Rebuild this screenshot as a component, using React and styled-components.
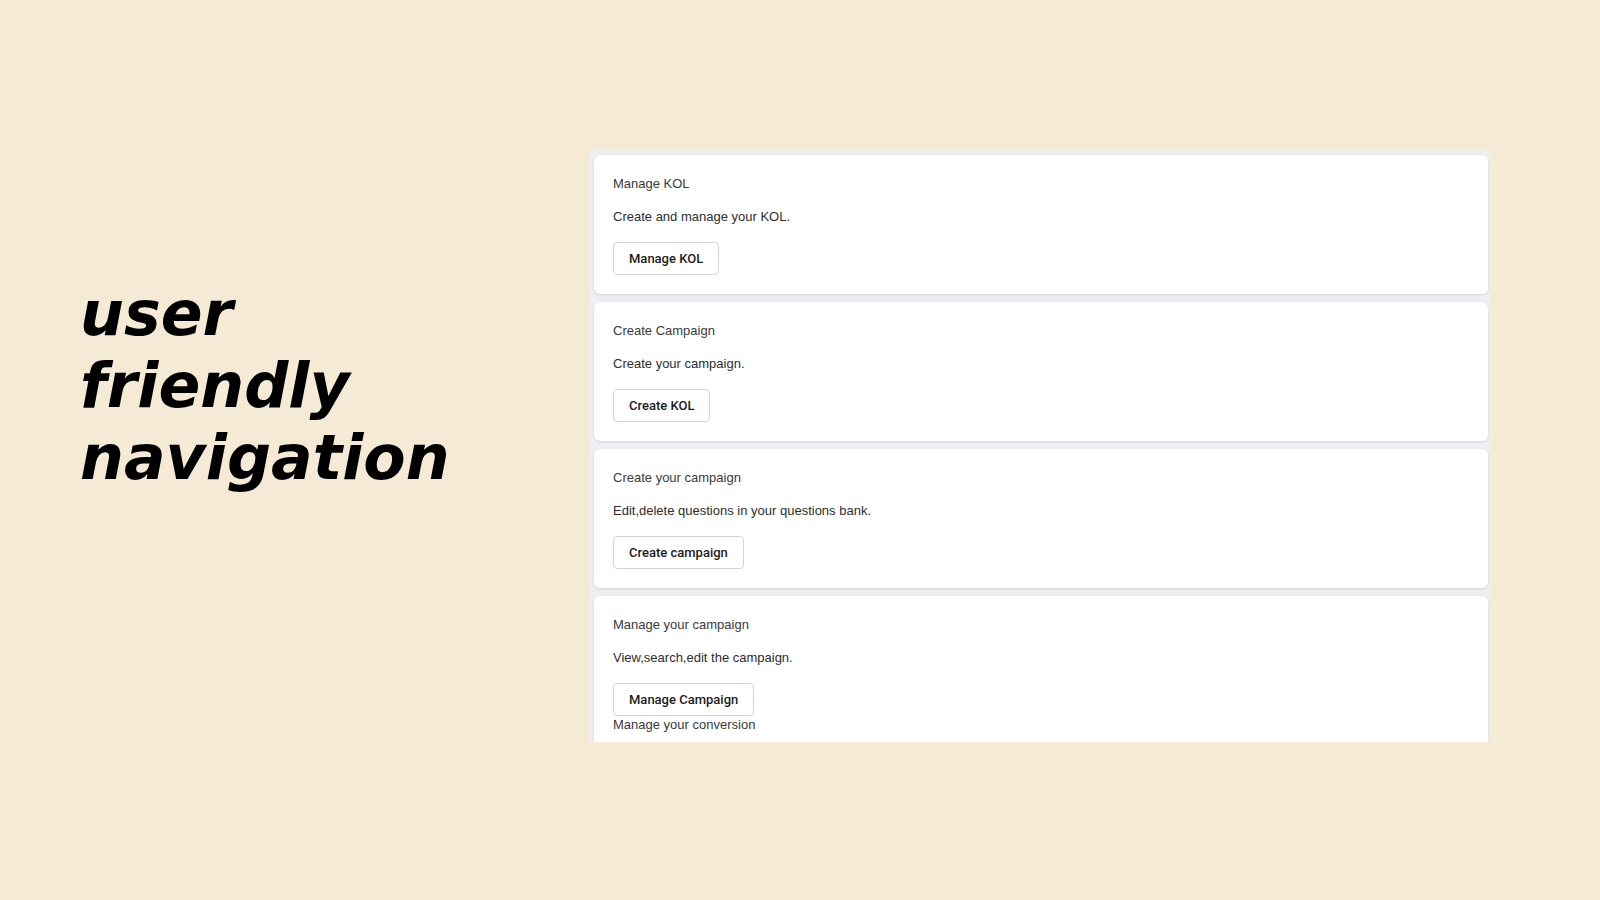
import React from "react";
import styled, { createGlobalStyle } from "styled-components";

const GlobalStyle = createGlobalStyle`
  html, body {
    margin: 0;
    padding: 0;
    background: #f5ead5;
  }
  * { box-sizing: border-box; }
`;

const Slide = styled.div`
  width: 1600px;
  height: 900px;
  display: flex;
  align-items: flex-start;
  background: #f5ead5;
  overflow: hidden;
`;

const HeadlineColumn = styled.div`
  width: 590px;
  flex: none;
  padding: 278px 0 0 80px;
`;

const Headline = styled.h1`
  margin: 0;
  width: 420px;
  font-family: "DejaVu Sans", sans-serif;
  font-weight: 700;
  font-style: italic;
  font-size: 61.7px;
  line-height: 72px;
  color: #000;
`;

const Panel = styled.div`
  margin-top: 150px;
  width: 900px;
  height: 592px;
  flex: none;
  background: #eeeff2;
  overflow: hidden;
  padding: 5px 2px 0 4px;
  display: flex;
  flex-direction: column;
  gap: 8px;
`;

const Card = styled.section`
  flex: none;
  background: #ffffff;
  border-radius: 6px;
  box-shadow: 0 1px 3px rgba(0, 0, 0, 0.12);
  padding: 21px 19px 19px;
  font-family: "Liberation Sans", Arial, sans-serif;
  font-size: 13px;
  color: #333;
`;

const Title = styled.div`
  line-height: 15px;
  margin-bottom: 18px;
  color: #3a3a3a;
`;

const Description = styled.p`
  margin: 0 0 17px;
  line-height: 16px;
  color: #2e2e2e;
`;

const ActionButton = styled.button`
  display: block;
  height: 33px;
  padding: 0 15px;
  background: #fff;
  border: 1px solid #d3d4d8;
  border-radius: 4px;
  font-family: Roboto, "Liberation Sans", sans-serif;
  font-weight: 500;
  font-size: 13px;
  color: #1c1c1c;
  cursor: pointer;
`;

const TrailingText = styled.div`
  margin-top: 1px;
  line-height: 16px;
  color: #3a3a3a;
`;

const items = [
  { title: "Manage KOL", desc: "Create and manage your KOL.", action: "Manage KOL" },
  { title: "Create Campaign", desc: "Create your campaign.", action: "Create KOL" },
  {
    title: "Create your campaign",
    desc: "Edit,delete questions in your questions bank.",
    action: "Create campaign",
  },
  {
    title: "Manage your campaign",
    desc: "View,search,edit the campaign.",
    action: "Manage Campaign",
    trailing: "Manage your conversion",
  },
];

export default function App() {
  return (
    <>
      <GlobalStyle />
      <Slide>
        <HeadlineColumn>
          <Headline>user friendly navigation</Headline>
        </HeadlineColumn>
        <Panel>
          {items.map((it) => (
            <Card key={it.title}>
              <Title>{it.title}</Title>
              <Description>{it.desc}</Description>
              <ActionButton>{it.action}</ActionButton>
              {it.trailing && <TrailingText>{it.trailing}</TrailingText>}
            </Card>
          ))}
        </Panel>
      </Slide>
    </>
  );
}
